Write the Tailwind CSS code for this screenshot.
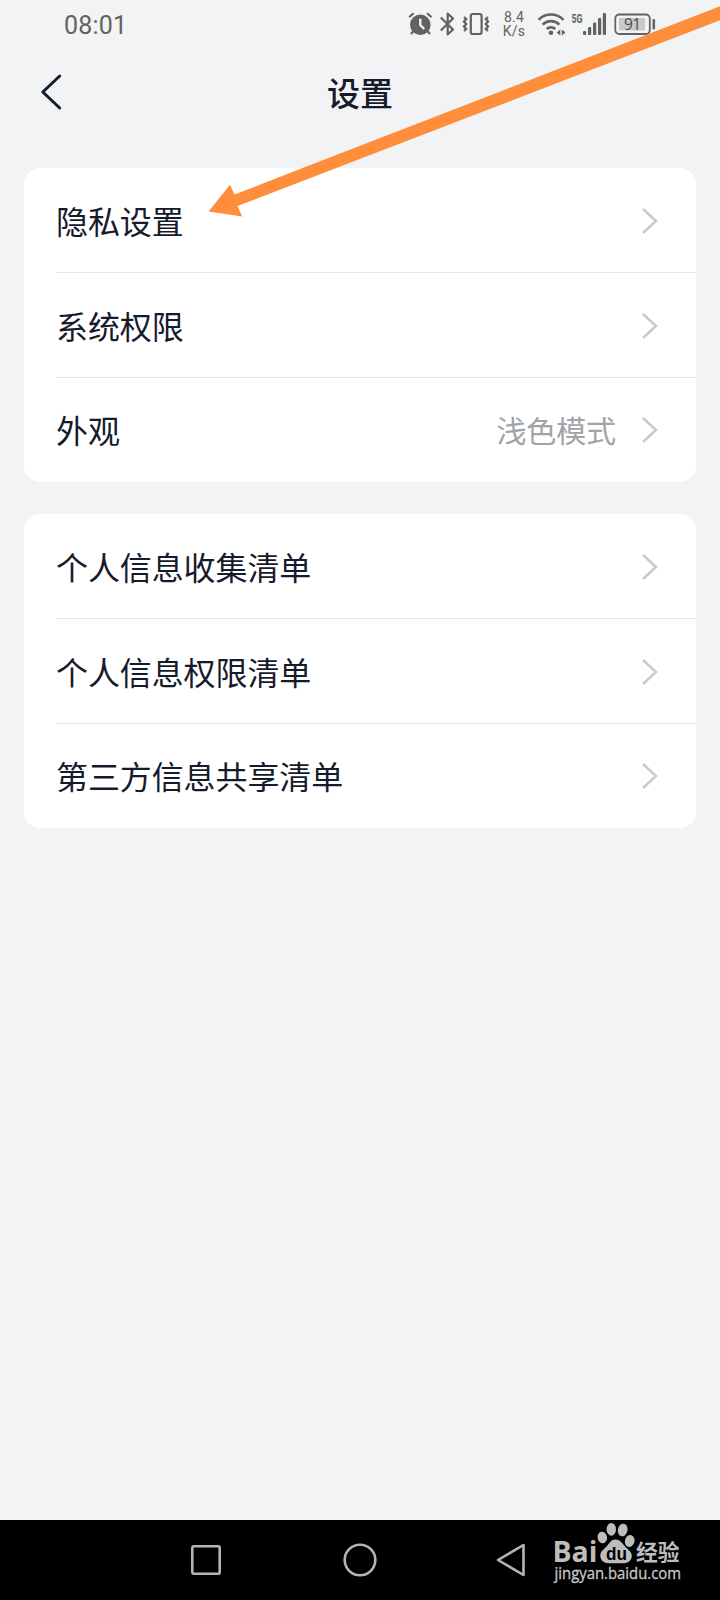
<!DOCTYPE html>
<html lang="zh-CN">
<head>
<meta charset="utf-8">
<title>设置</title>
<script src="https://cdn.jsdelivr.net/npm/@tailwindcss/browser@4"></script>
</head>
<body class="bg-[#f2f3f5]">
<div class="relative flex h-[1600px] w-[720px] flex-col overflow-hidden bg-[#f2f3f5] font-['Noto_Sans_CJK_SC',sans-serif] text-[#161b2c]">

  <!-- Status bar -->
  <header class="flex h-12 items-center pl-16 text-[#616362]">
    <span class="w-[344px] pt-0.5 font-[Roboto,sans-serif] text-[25px] leading-none tracking-[0.2px]">08:01</span>
    <svg class="h-12 w-6 shrink-0" viewBox="408 0 24 48" fill="none" stroke="currentColor">
      <circle cx="420.3" cy="24.7" r="10.3" fill="currentColor" stroke="none"/>
      <path d="M409.9 16.5l3-2.7M427.8 13.8l3 2.7" stroke-width="2.2" stroke-linecap="round"/>
      <path d="M413.5 31l-2.500 3M427.5 31l2.500 3" stroke-width="2.200"/>
      <path d="M420.3 18.800v6.200l4 4" stroke="#f2f3f5" stroke-width="2.400"/>
    </svg>
    <svg class="ml-2 h-12 w-4 shrink-0" viewBox="440 0 16 48" fill="none" stroke="currentColor" stroke-width="2.200" stroke-linejoin="round">
      <path d="M440.800 17.500l12.200 12-5.300 5V13.500l5.300 5-12.200 12"/>
    </svg>
    <svg class="ml-[6px] h-12 w-7 shrink-0" viewBox="462 0 28 48" fill="none" stroke="currentColor" stroke-width="2.200">
      <rect x="470.800" y="14" width="10.800" height="20" rx="2"/>
      <path d="M464 17l2.200 2-2.200 2.500 2.200 2.500-2.200 2.500 2.200 2.500-2.200 2M488 17l-2.200 2 2.200 2.500-2.200 2.500 2.200 2.500-2.200 2.500 2.200 2"/>
    </svg>
    <div class="ml-3 flex w-6 shrink-0 flex-col items-center font-[Roboto,sans-serif] text-[14px] leading-[14px] tracking-[0.2px]"><span>8.4</span><span>K/s</span></div>
    <svg class="ml-3 h-12 w-7 shrink-0" viewBox="538 0 28 48" fill="none" stroke="currentColor" stroke-width="2.600">
      <path d="M538.500 19.800a17.500 17.500 0 0 1 25 0M542.600 24.600a12 12 0 0 1 16.800 0M546.700 29a6.500 6.500 0 0 1 8.600 0"/>
      <circle cx="551" cy="32.700" r="2.300" fill="currentColor" stroke="none"/>
      <path d="M560.300 29.500v6l-3.700-3zM561.800 29.500v6l3.700-3z" fill="currentColor" stroke="none"/>
    </svg>
    <svg class="ml-1 h-12 w-9 shrink-0" viewBox="570 0 36 48" fill="currentColor">
      <text x="571.500" y="22.500" font-family="Roboto, sans-serif" font-weight="700" font-size="12.500" textLength="11" lengthAdjust="spacingAndGlyphs">5G</text>
      <rect x="583" y="31" width="3.200" height="4" rx="1"/><rect x="588" y="27" width="3.200" height="8" rx="1"/><rect x="593" y="22.500" width="3.200" height="12.500" rx="1"/><rect x="598" y="18" width="3.200" height="17" rx="1"/><rect x="602.800" y="13" width="3.200" height="22" rx="1"/>
    </svg>
    <svg class="ml-2 h-12 w-[42px] shrink-0" viewBox="614 0 42 48" fill="currentColor">
      <rect x="615.300" y="14.500" width="34.500" height="19.500" rx="4" fill="none" stroke="currentColor" stroke-width="1.800"/>
      <rect x="619" y="18" width="26" height="12.500" fill="#c8c9ca"/>
      <text x="624" y="29.700" font-family="Open Sans, sans-serif" font-size="15.500" fill="#4a4c4b" textLength="17">91</text>
      <rect x="652.500" y="19" width="2.600" height="10.500" rx="1"/>
    </svg>
  </header>

  <!-- Title bar -->
  <div class="flex h-[88px] items-center px-10">
    <svg class="h-10 w-6 shrink-0" viewBox="40 72 24 40" fill="none" stroke="currentColor" stroke-width="3" stroke-linecap="round" stroke-linejoin="round"><path d="M59.700 76L42.800 92l16.900 16"/></svg>
    <h1 class="mr-6 flex-1 text-center text-[33px] leading-none font-medium">设置</h1>
  </div>

  <main class="mt-8 flex flex-col gap-8 px-6">
    <section class="rounded-2xl bg-white pl-8 text-[32px] leading-none tracking-[-0.1px]">
      <div class="flex h-[105px] items-center border-b border-[#e5e6e8] pr-[38px]"><span class="flex-1">隐私设置</span><svg class="mt-0.5 h-7 w-4" viewBox="0 0 16 28" fill="none" stroke="#c8cacc" stroke-width="2.500"><path d="M1 2l13 12L1 26"/></svg></div>
      <div class="flex h-[105px] items-center border-b border-[#e5e6e8] pr-[38px]"><span class="flex-1">系统权限</span><svg class="mt-0.5 h-7 w-4" viewBox="0 0 16 28" fill="none" stroke="#c8cacc" stroke-width="2.500"><path d="M1 2l13 12L1 26"/></svg></div>
      <div class="flex h-[104px] items-center pr-[38px]"><span class="flex-1 pb-0.5">外观</span><span class="mr-[26px] pb-0.5 text-[30px] text-[#a0a3a8]">浅色模式</span><svg class="h-7 w-4" viewBox="0 0 16 28" fill="none" stroke="#c8cacc" stroke-width="2.500"><path d="M1 2l13 12L1 26"/></svg></div>
    </section>
    <section class="rounded-2xl bg-white pl-8 text-[32px] leading-none tracking-[-0.1px]">
      <div class="flex h-[105px] items-center border-b border-[#e5e6e8] pr-[38px]"><span class="flex-1">个人信息收集清单</span><svg class="mt-0.5 h-7 w-4" viewBox="0 0 16 28" fill="none" stroke="#c8cacc" stroke-width="2.500"><path d="M1 2l13 12L1 26"/></svg></div>
      <div class="flex h-[105px] items-center border-b border-[#e5e6e8] pr-[38px]"><span class="flex-1">个人信息权限清单</span><svg class="mt-0.5 h-7 w-4" viewBox="0 0 16 28" fill="none" stroke="#c8cacc" stroke-width="2.500"><path d="M1 2l13 12L1 26"/></svg></div>
      <div class="flex h-[104px] items-center pr-[38px]"><span class="flex-1 pb-0.5">第三方信息共享清单</span><svg class="h-7 w-4" viewBox="0 0 16 28" fill="none" stroke="#c8cacc" stroke-width="2.500"><path d="M1 2l13 12L1 26"/></svg></div>
    </section>
  </main>

  <!-- System navigation -->
  <nav class="mt-auto flex h-20 items-center bg-black pl-[190px] text-[#b4b4b4]">
    <svg class="size-8" viewBox="0 0 32 32" fill="none" stroke="currentColor" stroke-width="2.600"><rect x="2.300" y="2.300" width="27.400" height="27.400" rx="1.500"/></svg>
    <svg class="ml-[121px] size-[34px]" viewBox="0 0 34 34" fill="none" stroke="currentColor" stroke-width="2.600"><circle cx="17" cy="17" r="15.300"/></svg>
    <svg class="ml-[119px] h-[34px] w-[30px]" viewBox="0 0 30 34" fill="none" stroke="currentColor" stroke-width="2.600" stroke-linejoin="round"><path d="M27.500 2v30L2 17z"/></svg>
    <svg class="ml-[25px] h-20 w-[140px]" viewBox="550 1520 140 80" fill="#bdbdbd">
      <text x="551.500" y="1562" font-family="Open Sans, sans-serif" font-weight="700" font-size="29" textLength="45" lengthAdjust="spacingAndGlyphs">Bai</text>
      <ellipse cx="601.300" cy="1537.500" rx="4.700" ry="5.800" transform="rotate(-12 601.300 1537.500)"/>
      <ellipse cx="610.300" cy="1529.300" rx="4.700" ry="6.400"/>
      <ellipse cx="621.700" cy="1530" rx="4.800" ry="6.400" transform="rotate(12 621.700 1530)"/>
      <ellipse cx="628.700" cy="1541" rx="4.800" ry="6" transform="rotate(15 628.700 1541)"/>
      <path d="M614.500 1539.500c5 0 7 4 9.500 7s7 5 6.800 9.500c-.200 4.500-3.500 7.200-8 7.200h-15.500c-5 0-8-3.500-8-7.700 0-4.500 4.200-6.500 6.700-9.500s4-6.500 8.500-6.500z"/>
      <text x="605" y="1559.500" fill="#000" font-family="Liberation Sans, sans-serif" font-weight="700" font-size="18" textLength="21" lengthAdjust="spacingAndGlyphs">du</text>
      <text x="635" y="1560" font-family="Noto Sans CJK SC, sans-serif" font-weight="700" font-size="22" textLength="43.500" lengthAdjust="spacingAndGlyphs">经验</text>
      <text x="553.500" y="1579" font-family="Open Sans, sans-serif" font-size="15.500" fill="#c8c8c8" stroke="#c8c8c8" stroke-width="0.300" textLength="126.500" lengthAdjust="spacingAndGlyphs">jingyan.baidu.com</text>
    </svg>
  </nav>

  <!-- Annotation arrow -->
  <svg class="pointer-events-none absolute top-0 left-0 h-[230px] w-[720px]" viewBox="0 0 720 230" fill="#ff8e3c"><path d="M208.500 211.500L230 184.800l4.500 9.700L300 169 722 5.500v14L300 182l-62.500 24 4.700 10.500z"/></svg>
</div>
</body>
</html>
